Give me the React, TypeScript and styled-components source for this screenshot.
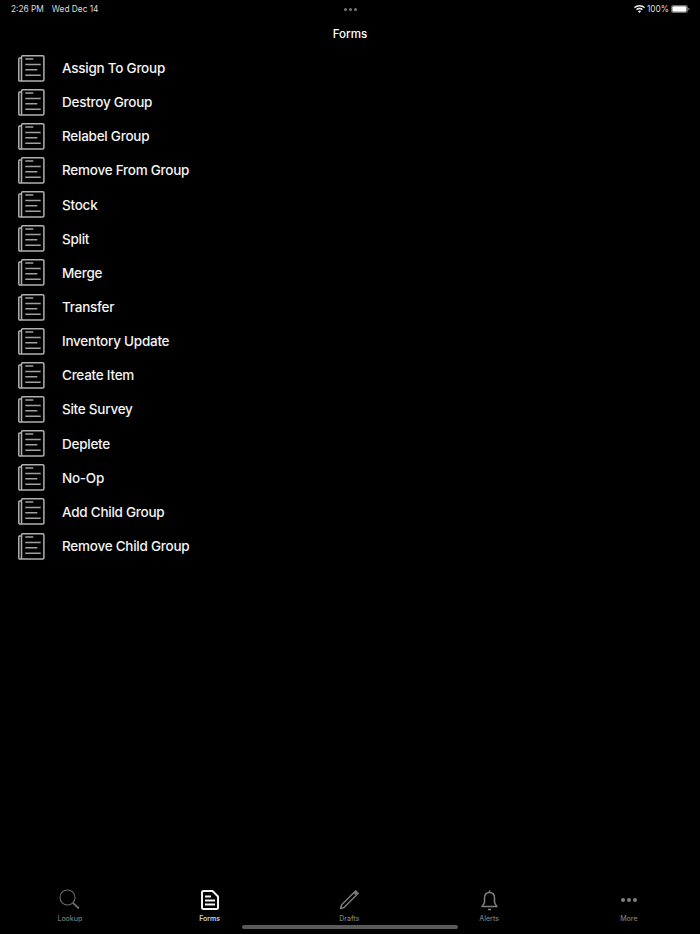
import React, {FunctionComponent} from "react";
import styled, {createGlobalStyle} from "styled-components";

const GlobalStyle = createGlobalStyle`
  html, body {
    margin: 0;
    padding: 0;
    background: #000;
    font-family: "Inter", "Liberation Sans", sans-serif;
  }
`;

const Page = styled.div`
  display: flex;
  flex-direction: column;
  width: 700px;
  height: 934px;
  background: #000;
  color: #fff;
  overflow: hidden;
  position: relative;
`;

const StatusBar = styled.div`
  display: grid;
  grid-template-columns: 1fr auto 1fr;
  align-items: center;
  height: 16px;
  padding: 1px 10px 0 11px;
  font-size: 8.3px;
  color: #dedede;
`;

const StatusLeft = styled.div`
  display: flex;
  gap: 8px;
`;

const StatusDots = styled.div`
  display: flex;
  gap: 2px;
`;

const StatusDot = styled.span`
  width: 3px;
  height: 3px;
  border-radius: 50%;
  background: #777;
`;

const StatusRight = styled.div`
  display: flex;
  justify-content: flex-end;
  align-items: center;
  gap: 2px;
`;

const NavTitle = styled.div`
  height: 34px;
  line-height: 34px;
  text-align: center;
  font-size: 11.6px;
  font-weight: 500;
`;

const FormList = styled.ul`
  flex: 1;
  margin: 0;
  padding: 0 0 0 18px;
  list-style: none;
`;

const FormRow = styled.li`
  display: flex;
  align-items: center;
  gap: 17px;
  height: 34.15px;
  font-size: 13.5px;
  font-weight: 500;
  letter-spacing: -0.25px;
  color: #f4f4f4;
`;

const TabBar = styled.nav`
  display: grid;
  grid-template-columns: repeat(5, 139.75px);
  height: 54px;
  flex-shrink: 0;
`;

const Tab = styled.div<{ $active?: boolean }>`
  display: flex;
  flex-direction: column;
  align-items: center;
  padding-top: 8px;
  gap: 2px;
  font-size: 7px;
  font-weight: 500;
  color: ${p => (p.$active ? "#e0e0e0" : "#7a7a7a")};
`;

const TabIconBox = styled.div`
  height: 24px;
  display: flex;
  align-items: center;
  justify-content: center;
`;

const HomeIndicator = styled.div`
  position: absolute;
  left: 242px;
  bottom: 5px;
  width: 216px;
  height: 4px;
  border-radius: 2px;
  background: #5a5a5a;
`;

const FormIcon = () => (
    <svg width="27" height="27" viewBox="0 0 27 27" fill="none" stroke="#b0b0b0" strokeWidth="1.5" style={{flexShrink: 0}}>
        <path d="M3.5 3 H1.600 A1 1 0 0 0 .8 4 V25 A1 1 0 0 0 1.800 26 H4"/>
        <rect x="3.500" y=".8" width="22.400" height="25.200" rx="1.200"/>
        <path d="M7.300 4 H15.300 M7.300 9.500 H22.700 M7.300 14.800 H19.300 M7.300 20.200 H22.700" stroke="#a0a0a0" strokeWidth="1.600"/>
    </svg>
);

const WifiIcon = () => (
    <svg width="11" height="8" viewBox="0 0 11 8" fill="#eee">
        <path d="M5.5 0C3.4 0 1.5.8 0 2.2l1 1C2.2 2.1 3.8 1.4 5.5 1.4S8.8 2.1 10 3.2l1-1C9.500.8 7.600 0 5.500 0z"/>
        <path d="M5.500 2.800c-1.300 0-2.500.5-3.400 1.400l1 1c.6-.6 1.500-1 2.400-1s1.800.4 2.400 1l1-1c-.9-.9-2.100-1.400-3.400-1.400z"/>
        <path d="M5.500 5.500c-.6 0-1.200.2-1.600.7L5.500 8l1.600-1.800c-.4-.5-1-.7-1.600-.7z"/>
    </svg>
);

const BatteryIcon = () => (
    <svg width="19" height="8" viewBox="0 0 19 8">
        <rect x=".4" y=".4" width="16" height="7.200" rx="1.800" fill="none" stroke="#999" strokeWidth=".8"/>
        <rect x="1.300" y="1.300" width="14.200" height="5.400" rx="1" fill="#fff"/>
        <path d="M17.400 2.800 C18.200 3 18.500 3.500 18.500 4 C18.500 4.500 18.200 5 17.400 5.200z" fill="#999"/>
    </svg>
);

const LookupIcon = () => (
    <svg width="22" height="22" viewBox="0 0 22 22" fill="none" stroke="#6a6a6a">
        <circle cx="8.500" cy="8.500" r="7.500" strokeWidth="1.100"/>
        <path d="M14 14 L20 19.500" strokeWidth="1.800"/>
    </svg>
);

const FormsIcon = () => (
    <svg width="18" height="20" viewBox="0 0 18 20" fill="none" stroke="#f2f2f2">
        <path d="M2.500 1 H11.500 L17 6.500 V17.500 A1.500 1.500 0 0 1 15.500 19 H2.500 A1.500 1.500 0 0 1 1 17.500 V2.500 A1.500 1.500 0 0 1 2.500 1 Z" strokeWidth="2"/>
        <path d="M4 6.500 H10 M4 10.500 H14 M4 14.500 H14" strokeWidth="2"/>
    </svg>
);

const DraftsIcon = () => (
    <svg width="20" height="20" viewBox="0 0 20 20" fill="none" stroke="#7a7a7a">
        <path d="M15 2.500 L17.500 5 L5 17.500 L1.500 18.500 L2.500 15 Z" strokeWidth="1.500" strokeLinejoin="round"/>
        <path d="M15.800 .8 L19.200 4.200" strokeWidth="2.600"/>
    </svg>
);

const AlertsIcon = () => (
    <svg width="17" height="21" viewBox="0 0 17 21" fill="none" stroke="#7f7f7f" strokeWidth="1.500">
        <path d="M8.500 2.500 C5 2.500 3.500 5 3.500 8 V12 C3.500 14 2.500 15 1 16.500 H16 C14.500 15 13.500 14 13.500 12 V8 C13.500 5 12 2.500 8.500 2.500 Z" strokeLinejoin="round"/>
        <path d="M8.500 .5 V2.500 M7 19.500 H10" strokeWidth="1.600"/>
    </svg>
);

const MoreIcon = () => (
    <svg width="16" height="4" viewBox="0 0 16 4" fill="#7f7f7f">
        <circle cx="2" cy="2" r="2"/>
        <circle cx="8" cy="2" r="2"/>
        <circle cx="14" cy="2" r="2"/>
    </svg>
);

const forms = [
    "Assign To Group",
    "Destroy Group",
    "Relabel Group",
    "Remove From Group",
    "Stock",
    "Split",
    "Merge",
    "Transfer",
    "Inventory Update",
    "Create Item",
    "Site Survey",
    "Deplete",
    "No-Op",
    "Add Child Group",
    "Remove Child Group",
];

const App: FunctionComponent = () => {
    return <Page>
        <GlobalStyle/>
        <StatusBar>
            <StatusLeft><span>2:26 PM</span><span>Wed Dec 14</span></StatusLeft>
            <StatusDots><StatusDot/><StatusDot/><StatusDot/></StatusDots>
            <StatusRight><WifiIcon/><span>100%</span><BatteryIcon/></StatusRight>
        </StatusBar>
        <NavTitle>Forms</NavTitle>
        <FormList>
            {forms.map(name => <FormRow key={name}><FormIcon/>{name}</FormRow>)}
        </FormList>
        <TabBar>
            <Tab><TabIconBox><LookupIcon/></TabIconBox>Lookup</Tab>
            <Tab $active><TabIconBox><FormsIcon/></TabIconBox>Forms</Tab>
            <Tab><TabIconBox><DraftsIcon/></TabIconBox>Drafts</Tab>
            <Tab><TabIconBox><AlertsIcon/></TabIconBox>Alerts</Tab>
            <Tab><TabIconBox><MoreIcon/></TabIconBox>More</Tab>
        </TabBar>
        <HomeIndicator/>
    </Page>;
}

export default App;
